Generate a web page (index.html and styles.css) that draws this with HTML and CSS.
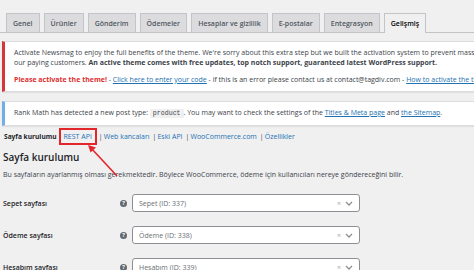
FILE: index.html
```html
<!DOCTYPE html>
<html lang="tr">
<head>
	<meta charset="UTF-8">
	<title>WooCommerce Ayarlar</title>
	<link rel="stylesheet" href="styles.css">
</head>
<body>
	<div class="page">
		<nav class="tabs">
			<a class="tab">Genel</a>
			<a class="tab">Ürünler</a>
			<a class="tab">Gönderim</a>
			<a class="tab">Ödemeler</a>
			<a class="tab">Hesaplar ve gizlilik</a>
			<a class="tab">E-postalar</a>
			<a class="tab">Entegrasyon</a>
			<a class="tab active">Gelişmiş</a>
		</nav>

		<div class="notice notice-error">
			<p class="line">Activate Newsmag to enjoy the full benefits of the theme. We're sorry about this extra step but we built the activation system to prevent mass piracy of our themes, this allows us to better serve</p>
			<p class="line">our paying customers. <b>An active theme comes with free updates, top notch support, guaranteed latest WordPress support.</b></p>
			<p class="line gap"><b class="warn">Please activate the theme!</b> - <a href="#">Click here to enter your code</a> - if this is an error please contact us at contact@tagdiv.com - <a href="#">How to activate the theme</a></p>
		</div>

		<div class="notice notice-info">
			<p class="line">Rank Math has detected a new post type: <code>product</code>. You may want to check the settings of the <a href="#">Titles &amp; Meta page</a> and <a href="#">the Sitemap</a>.</p>
		</div>

		<ul class="subnav">
			<li><b>Sayfa kurulumu</b></li>
			<li><a href="#" class="boxed">REST API</a></li>
			<li>|<a href="#">Web kancaları</a></li>
			<li>|<a href="#">Eski API</a></li>
			<li>|<a href="#">WooCommerce.com</a></li>
			<li>|<a href="#">Özellikler</a></li>
		</ul>

		<h2 class="title">Sayfa kurulumu</h2>
		<p class="intro">Bu sayfaların ayarlanmış olması gerekmektedir. Böylece WooCommerce, ödeme için kullanıcıları nereye göndereceğini bilir.</p>

		<div class="form">
			<div class="row">
				<span class="label">Sepet sayfası</span>
				<span class="help">?</span>
				<div class="select">
					<span class="value">Sepet (ID: 337)</span>
					<span class="clear">×</span>
					<svg class="chev" width="8" height="5" viewBox="0 0 8 5"><path d="M1 1l3 3 3-3" fill="none" stroke="#8c8f94" stroke-width="1.3"/></svg>
				</div>
			</div>
			<div class="row">
				<span class="label">Ödeme sayfası</span>
				<span class="help">?</span>
				<div class="select">
					<span class="value">Ödeme (ID: 338)</span>
					<span class="clear">×</span>
					<svg class="chev" width="8" height="5" viewBox="0 0 8 5"><path d="M1 1l3 3 3-3" fill="none" stroke="#8c8f94" stroke-width="1.3"/></svg>
				</div>
			</div>
			<div class="row">
				<span class="label">Hesabım sayfası</span>
				<span class="help">?</span>
				<div class="select">
					<span class="value">Hesabım (ID: 339)</span>
					<span class="clear">×</span>
					<svg class="chev" width="8" height="5" viewBox="0 0 8 5"><path d="M1 1l3 3 3-3" fill="none" stroke="#8c8f94" stroke-width="1.3"/></svg>
				</div>
			</div>
		</div>

		<!-- annotation arrow -->
		<svg class="arrow" width="40" height="40" viewBox="0 0 40 40">
			<path d="M31 33L5 5" stroke="#e3262b" stroke-width="1.6" fill="none"/>
			<path d="M2 2l8 2.5-5.5 5z" fill="#e3262b"/>
		</svg>
	</div>
</body>
</html>
```

FILE: styles.css
```css
html,
body {
	margin: 0;
	height: 100%;
	overflow: hidden;
}

body {
	background-color: #f0f0f1;
	font-family: 'Open Sans', 'Noto Sans', sans-serif;
	font-size: 7px;
	color: #3c434a;
}

.page {
	position: relative;
	width: 560px;
	padding-top: 13px;
}

a {
	color: #2271b1;
	text-decoration: underline;
}

p {
	margin: 0;
}

.tabs {
	display: flex;
	gap: 4px;
	padding-left: 6px;
	height: 19px;
	border-bottom: 1px solid #c3c4c7;
}

.tab {
	display: flex;
	align-items: center;
	padding: 0 6px;
	background-color: #dcdcde;
	border: 1px solid #c3c4c7;
	border-bottom: none;
	color: #50575e;
	font-size: 7px;
	font-weight: 600;
	text-decoration: none;
}

.tab.active {
	background-color: #f0f0f1;
	color: #000;
	margin-bottom: -1px;
}

.notice {
	background-color: #fff;
	margin-left: 2px;
	box-shadow: 0 1px 1px rgba(0, 0, 0, 0.06);
	border: 1px solid #dcdcde;
	border-left-width: 3px;
}

.notice-error {
	margin-top: 8px;
	border-left-color: #d63638;
	padding: 6px 0 6px 9px;
	height: 37px;
}

.notice-info {
	margin-top: 9px;
	border-left-color: #72aee6;
	padding: 6px 0 6px 9px;
}

.line {
	line-height: 10px;
	white-space: nowrap;
}

.line.gap {
	margin-top: 7px;
}

.warn {
	color: #e02d2d;
}

code {
	font-family: 'Liberation Mono', monospace;
	font-size: 6.6px;
	background-color: #f0f0f1;
	padding: 1px 3px;
}

.subnav {
	display: flex;
	align-items: center;
	list-style: none;
	margin: 3px 0 0;
	padding: 0 0 0 4px;
	height: 14px;
	white-space: nowrap;
	gap: 2px;
}

.subnav b {
	color: #1d2327;
	font-size: 6.6px;
}

.subnav a {
	text-decoration: none;
	margin: 0 1px;
}

.subnav .boxed {
	display: inline-block;
	border: 2px solid #e3262b;
	padding: 2px 3px;
	margin: 0;
}

.title {
	margin: 7px 0 0 3px;
	font-size: 10px;
	font-weight: 600;
	color: #1d2327;
	line-height: 14px;
}

.intro {
	margin: 6px 0 0 3px;
	line-height: 10px;
}

.form {
	display: flex;
	flex-direction: column;
	gap: 14px;
	margin-top: 14px;
	padding-left: 3px;
}

.row {
	display: flex;
	align-items: center;
	height: 18px;
}

.label {
	width: 117px;
	font-weight: 600;
	color: #1d2327;
	font-size: 7px;
}

.help {
	width: 7px;
	height: 7px;
	border-radius: 50%;
	background-color: #646970;
	color: #fff;
	font-size: 5.5px;
	font-weight: 700;
	display: flex;
	align-items: center;
	justify-content: center;
	margin-right: 5px;
}

.select {
	display: flex;
	align-items: center;
	width: 214px;
	height: 16px;
	background-color: #fff;
	border: 1px solid #8c8f94;
	border-radius: 3px;
	padding: 0 6px;
	color: #6b7075;
}

.value {
	flex: 1;
}

.clear {
	color: #a7aaad;
	font-size: 7px;
	margin-right: 4px;
}

.arrow {
	position: absolute;
	left: 86px;
	top: 143px;
}
```
